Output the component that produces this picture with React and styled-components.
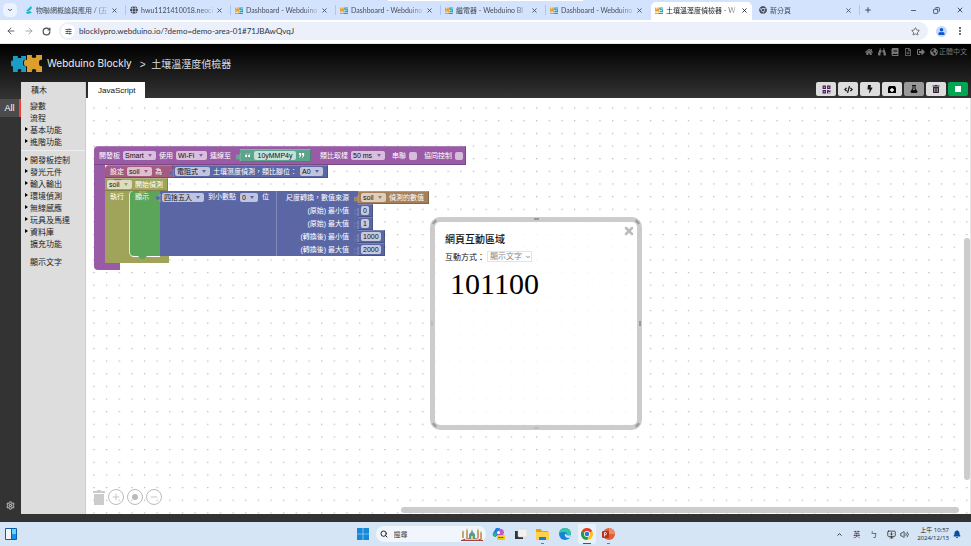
import styled, { createGlobalStyle, css } from 'styled-components'
import {
  FaHome, FaBinoculars, FaBook, FaRegFileAlt, FaSignOutAlt, FaGlobeAmericas,
  FaQrcode, FaCode, FaBolt, FaFlask, FaTrashAlt, FaBell, FaGlobe, FaUser, FaChrome,
} from 'react-icons/fa'
import {
  ArrowLeft, ArrowRight, RotateCw, SlidersHorizontal, Star, EllipsisVertical, ChevronDown,
  ChevronUp, X, Plus, Minus, Copy, Search, Settings, Volume2, MonitorDown,
} from 'lucide-react'

const colors = {
  dark: '#333333',
  purple: '#995ba5',
  red: '#a55b80',
  blue: '#5b67a5',
  olive: '#a0a45b',
  green: '#5ba55b',
  brown: '#a5805b',
  mint: '#5ba58c',
}

const sans = '"Liberation Sans", "Noto Sans CJK TC", sans-serif'
const ui = 'Lato, "Noto Sans CJK TC", sans-serif'

const GlobalStyle = createGlobalStyle`
  * { box-sizing: border-box; }
  body { margin: 0; font-family: ${sans}; color: #333; }
  button, input, select { font: inherit; color: inherit; margin: 0; padding: 0; border: 0; background: none; }
  svg { display: block; flex: none; }
`

const Page = styled.div`
  display: flex;
  flex-direction: column;
  height: 100vh;
  overflow: hidden;
`

/* ---------- browser ---------- */

const TabStrip = styled.div`
  position: relative;
  display: flex;
  align-items: center;
  height: 20px;
  padding: 0 4px 0 3px;
  background: #d3e3fd;
  font: 7px ${ui};
  color: #474c55;

  &::before {
    content: '';
    position: absolute;
    top: 0;
    left: 40%;
    right: 40%;
    height: 1px;
    background: #fff;
  }
`

const TabSearch = styled.button`
  display: grid;
  place-items: center;
  width: 14px;
  height: 14px;
  margin-right: 4px;
  border-radius: 5px;
  background: #ecf3fe;
`

const BrowserTab = styled.div`
  display: flex;
  align-items: center;
  flex: 0 1 105px;
  gap: 3px;
  min-width: 0;
  height: 10px;
  padding: 0 7px 0 4px;
  border-right: 1px solid #a8c7fa;
  ${({ $active }) => $active && css`
    flex-basis: 101px;
    height: 18px;
    margin: 2px 3px 0 0;
    padding: 0 4px 2px 4px;
    border: 0;
    border-radius: 5px 5px 0 0;
    background: #fff;
    color: #202124;
  `}
  ${({ $noLine }) => $noLine && css`border-color: transparent;`}
`

const TabTitle = styled.span`
  flex: 1;
  overflow: hidden;
  white-space: nowrap;
  mask-image: linear-gradient(90deg, #000 80%, rgba(0, 0, 0, 0.2));
`

const PlainButton = styled.button`
  display: grid;
  place-items: center;
  justify-self: start;
`

const WindowButtons = styled.div`
  display: flex;
  flex: 1;
  align-items: center;
  justify-content: flex-end;
  gap: 16px;
  padding-right: 3px;

  button:first-child { margin-right: auto; margin-left: 4px; }
`

const AddressRow = styled.div`
  display: flex;
  align-items: center;
  gap: 8px;
  height: 24px;
  padding: 0 6px 1px;
  border-bottom: 1px solid #e4e7ee;
  background: #fff;
  color: #44474c;
`

const AddressBar = styled.label`
  display: flex;
  align-items: center;
  flex: 1;
  gap: 4px;
  height: 18px;
  padding: 0 8px 0 2px;
  border-radius: 9px;
  background: #ecf0fa;

  input {
    flex: 1;
    font: 8px ${ui};
    color: #30343a;
  }
`

const SiteInfo = styled.span`
  display: grid;
  place-items: center;
  width: 14px;
  height: 14px;
  border-radius: 50%;
  background: #fff;
`

const Avatar = styled.span`
  display: grid;
  place-items: center;
  width: 11px;
  height: 11px;
  border-radius: 50%;
  background: #c5dafc;
  color: #0b57d0;
`

/* ---------- blockly app ---------- */

const AppShell = styled.div`
  display: flex;
  flex-direction: column;
  flex: 1;
  min-height: 0;
  padding-bottom: 8px;
  background: linear-gradient(#000, ${colors.dark} 54px);
`

const AppHeader = styled.header`
  display: flex;
  align-items: center;
  height: 38px;
  padding: 0 4px 0 10px;
  color: #ddd;
`

const Brand = styled.a`
  display: flex;
  align-items: center;
  gap: 4px;
  color: #eee;
  font: 10px Inter, ${sans};
  text-decoration: none;
`

const ProjectName = styled.h1`
  flex: 1;
  margin: 0 0 0 8px;
  font-size: 10px;
  font-weight: normal;
  white-space: pre;
`

const HeaderLinks = styled.nav`
  display: flex;
  align-self: flex-start;
  gap: 5px;
  padding-top: 4px;

  a {
    display: flex;
    align-items: center;
    gap: 1px;
    color: #777;
    font-size: 7px;
    line-height: 8px;
    text-decoration: none;
  }
`

const Main = styled.div`
  display: flex;
  flex: 1;
  min-height: 0;
`

const Rail = styled.aside`
  display: flex;
  flex-direction: column;
  justify-content: space-between;
  width: 21px;
  padding-top: 17px;
`

const RailButton = styled.button`
  display: grid;
  place-items: center;
  height: 18px;
  color: ${({ $active }) => ($active ? '#fff' : '#aaa')};
  font-size: 9px;
  ${({ $active }) => $active && css`
    background: #4b4b4b;
    border-right: 2px solid #f4402f;
  `}
`

const Toolbox = styled.nav`
  width: 65px;
  padding-top: 3px;
  background: #ddd;
  border-right: 1px solid #ccc;
  color: #222;
  font-size: 8px;
`

const ToolboxTitle = styled.h2`
  margin: 0 0 3px 10px;
  font-size: 8px;
  font-weight: normal;
  line-height: 11px;
`

const Category = styled.button`
  display: flex;
  align-items: center;
  gap: 3px;
  width: 100%;
  height: 12px;
  padding-left: ${({ $leaf }) => ($leaf ? '9px' : '4px')};
  white-space: nowrap;

  &::before {
    content: '';
    display: ${({ $leaf }) => ($leaf ? 'none' : 'block')};
    border-left: 3px solid #000;
    border-top: 2px solid transparent;
    border-bottom: 2px solid transparent;
    margin-right: -1px;
  }
`

const Divider = styled.hr`
  margin: 3px 0 2px;
  border: 0;
  border-top: 1px solid ${({ $hidden }) => ($hidden ? 'transparent' : '#eee')};
`

const Editor = styled.main`
  display: flex;
  flex-direction: column;
  flex: 1;
  min-width: 0;
`

const EditorBar = styled.div`
  display: flex;
  justify-content: space-between;
  height: 16px;
  padding: 0 3px 0 2px;
`

const CodeTab = styled.button`
  padding: 0 10px;
  background: #fff;
  color: #111;
  font-size: 8px;
`

const Actions = styled.div`
  display: flex;
  gap: 2px;
`

const ActionButton = styled.button`
  display: grid;
  place-items: center;
  width: 20px;
  height: 14px;
  border-radius: 2px;
  background: ${({ $bg }) => $bg || '#ddd'};
  color: ${({ $color }) => $color || '#111'};
`

const Workspace = styled.section`
  position: relative;
  flex: 1;
  overflow: hidden;
  border-right: 1px solid #e4e4e4;
  background: #fff;
`

const GridLayer = styled.svg`
  position: absolute;
  inset: 0;
`

const ZoomControls = styled.div`
  position: absolute;
  left: 7px;
  bottom: 9px;
  display: flex;
  align-items: center;
  gap: 3px;
  color: #bbb;
`

const RoundButton = styled.button`
  display: grid;
  place-items: center;
  width: 16px;
  height: 16px;
  border: 1px solid #bbb;
  border-radius: 50%;
`

const Scrollbar = styled.div`
  position: absolute;
  border-radius: 3px;
  background: #ccc;
  ${({ $vertical }) => ($vertical
    ? css`right: 0; top: 140px; bottom: 34px; width: 6px;`
    : css`bottom: 1px; left: 315px; right: 11px; height: 6px;`)}
`

/* ---------- blocks ---------- */

const Program = styled.div`
  position: absolute;
  left: 8px;
  top: 48px;
  color: #fff;
  font-size: 7px;
  line-height: 8px;
  white-space: nowrap;
`

const Row = styled.div`
  display: flex;
`

const Block = styled.div`
  position: relative;
  display: flex;
  align-items: center;
  width: max-content;
  height: ${({ $tall }) => ($tall ? '19px' : '13px')};
  gap: 3px;
  padding: 0 ${({ $end }) => $end || '4px'} 0 ${({ $start }) => $start || '4px'};
  border: 1px solid rgba(255, 255, 255, 0.2);
  border-right-color: rgba(0, 0, 0, 0.2);
  border-bottom-color: rgba(0, 0, 0, 0.2);
  border-width: 1px 1px 1px 0;
  border-radius: ${({ $round }) => ($round ? '4px 0 0 0' : '0')};
  background: ${({ $color }) => $color};
`

const Group = styled.div`
  display: flex;
  align-items: center;
  gap: 3px;
  margin-left: ${({ $gap }) => $gap || '0'};
`

const PlugShape = styled.svg`
  position: absolute;
  left: -4px;
  top: 3px;
`

const PillWrap = styled.span`
  position: relative;
  display: inline-flex;
  color: ${({ $color }) => $color};

  select {
    appearance: none;
    height: 9px;
    padding: 0 12px 0 2px;
    border-radius: 2px;
    background: rgba(255, 255, 255, 0.62);
    color: #111;
    line-height: 9px;
  }

  svg {
    position: absolute;
    right: 4px;
    top: 3px;
    pointer-events: none;
  }
`

const Field = styled.input`
  field-sizing: content;
  min-width: ${({ $wide }) => ($wide ? '42px' : '0')};
  height: 9px;
  padding: 0 2px;
  border-radius: 2px;
  background: rgba(255, 255, 255, 0.65);
  color: #111;
  line-height: 9px;
  text-align: center;
`

const Tick = styled.input`
  appearance: none;
  width: 8px;
  height: 8px;
  border-radius: 2px;
  background: rgba(255, 255, 255, 0.6);
`

const TickLabel = styled.label`
  display: flex;
  align-items: center;
  gap: 3px;
`

const Mouth = styled.div`
  position: relative;
  width: max-content;
  border-left: ${({ $arm }) => $arm} solid ${({ $color }) => $color};
`

const Foot = styled.div`
  width: ${({ $width }) => $width};
  height: 7px;
  border-radius: 0 0 0 ${({ $round }) => ($round ? '4px' : '0')};
  background: ${({ $color }) => $color};
`

const LoopLabel = styled.div`
  width: 25px;
  padding: 2px 0 0 5px;
  background: ${colors.olive};
`

const ShowBlock = styled.div`
  position: relative;
  width: 30px;
  padding: 2px 0 0 5px;
  border-radius: 4px 0 0 4px;
  background: ${colors.green};
  box-shadow: -1px 0 #e4e8cf, 0 1px #fff;
`

const LoopRow = styled(Row)`
  background: linear-gradient(90deg, ${colors.olive} 40px, transparent 40px);
`

const Notch = styled.svg`
  position: absolute;
  left: 8px;
  ${({ $below }) => ($below ? css`bottom: -3px;` : css`top: 0;`)}
`

const RoundBlock = styled.div`
  position: relative;
  display: flex;
  align-items: flex-start;
  gap: 4px;
  width: 117px;
  padding: 2px 0 0 2px;
  border-right: 1px solid #8189b9;
  background: ${colors.blue};
`

const ScaleLabels = styled.div`
  background: ${colors.blue};
  width: 81px;
  padding-right: 9px;
  text-align: right;

  div { height: 13px; padding-top: 3px; }
`

const socket = 'M4 0 V2 Q4 3 2 2 Q0 1 0 3 V5 Q0 7 2 6 Q4 5 4 6 V8 Z'

function Plug({ color }) {
  return <PlugShape width="5" height="8"><path d={socket + ' M4 0 H5 V8 H4 Z'} fill={color} stroke="#ffffff44" strokeWidth=".4" /></PlugShape>
}

function Bump({ color, below }) {
  return <Notch $below={below} width="9" height="3"><path d="M0 0 H9 L6 3 H3 Z" fill={color} /></Notch>
}

function Pill({ value, label, color }) {
  return (
    <PillWrap $color={color}>
      <select aria-label={label}><option>{value}</option></select>
      <svg width="4" height="3"><path d="M0 0 H4 L2 3 Z" fill="currentColor" /></svg>
    </PillWrap>
  )
}

const scaleRows = [
  ['(原始) 最小值', '0'],
  ['(原始) 最大值', '1'],
  ['(轉換後) 最小值', '1000'],
  ['(轉換後) 最大值', '2000'],
]

function BlockProgram() {
  return (
    <Program>
      <Block $color={colors.purple} $tall $round $start="5px" $end="2px">
        <span>開發板</span><Pill value="Smart" label="開發板" color={colors.purple} />
        <span>使用</span><Pill value="Wi-Fi" label="使用" color={colors.purple} />
        <span>連線至</span>
        <Group $gap="6px">
          <Block $color={colors.mint} $start="5px" $end="5px">
            <Plug color={colors.mint} />
            <svg width="6" height="5"><path d="M3 0 Q0 1 0 4 H2 V2 H1 M6 0 Q3 1 3 4 H5 V2 H4" fill="#fff" /></svg>
            <Field $wide aria-label="device" defaultValue="10yMMP4y" />
            <svg width="6" height="5"><path d="M0 0 H2 Q3 3 0 5 L1 2 H0 Z M3 0 H5 Q6 3 3 5 L4 2 H3 Z" fill="#fff" /></svg>
          </Block>
        </Group>
        <Group $gap="6px"><span>類比取樣</span><Pill value="50 ms" label="類比取樣" color={colors.purple} /></Group>
        <Group $gap="4px"><TickLabel>串聯<Tick type="checkbox" /></TickLabel></Group>
        <Group $gap="4px"><TickLabel>協同控制<Tick type="checkbox" /></TickLabel></Group>
      </Block>
      <Mouth $arm="11px" $color={colors.purple}>
        <Row>
          <Block $color={colors.red} $round $start="5px" $end="10px">
            <Bump color={colors.purple} />
            <span>設定</span><Pill value="soil" label="設定" color={colors.red} /><span>為</span>
          </Block>
          <Block $color={colors.blue} $start="2px">
            <Plug color={colors.blue} />
            <Pill value="電阻式" label="感測器" color={colors.blue} />
            <span>土壤濕度偵測，類比腳位：</span>
            <Pill value="A0" label="腳位" color={colors.blue} />
          </Block>
        </Row>
        <Block $color={colors.olive} $start="2px">
          <Bump color={colors.red} />
          <Pill value="soil" label="感測器" color={colors.olive} /><span>開始偵測</span>
        </Block>
        <LoopRow>
          <LoopLabel>執行</LoopLabel>
          <ShowBlock>
            <Bump color={colors.olive} />
            顯示
            <Bump below color={colors.green} />
          </ShowBlock>
          <RoundBlock>
            <Plug color={colors.blue} />
            <Pill value="四捨五入" label="方式" color={colors.blue} />
            <span>到小數點</span>
            <Pill value="0" label="小數點" color={colors.blue} />
            <span>位</span>
          </RoundBlock>
          <ScaleLabels>
            <div>尺度轉換，數值來源</div>
            {scaleRows.map(([label]) => <div key={label}>{label}</div>)}
          </ScaleLabels>
          <div>
            <Block $color={colors.brown} $start="3px">
              <Plug color={colors.brown} />
              <Pill value="soil" label="數值來源" color={colors.brown} /><span>偵測的數值</span>
            </Block>
            {scaleRows.map(([label, value]) => (
              <Block key={label} $color={colors.blue} $start="3px" $end="3px">
                <Plug color={colors.blue} />
                <Field aria-label={label} defaultValue={value} />
              </Block>
            ))}
          </div>
        </LoopRow>
        <Foot $width="64px" $color={colors.olive} />
      </Mouth>
      <Foot $width="26px" $round $color={colors.purple} />
    </Program>
  )
}

/* ---------- floating panel ---------- */

const Panel = styled.aside`
  position: absolute;
  left: 344px;
  top: 119px;
  width: 212px;
  height: 213px;
  padding: 12px 10px;
  border: 5px solid #ccc;
  border-radius: 10px;
  background: rgba(255, 255, 255, 0.8);
  color: #111;
  font-size: 8px;
`

const PanelTitle = styled.h2`
  margin: 0 0 5px;
  font-size: 10px;
  font-weight: 500;
  line-height: 12px;
`

const ModeRow = styled.label`
  display: flex;
  align-items: center;
  gap: 2px;
  height: 11px;
`

const ModeSelect = styled.span`
  display: flex;
  position: relative;
  color: #888;

  select {
    appearance: none;
    height: 11px;
    padding: 0 9px 0 2px;
    border: 1px solid #e4e4e4;
  }

  svg { position: absolute; right: 1px; top: 3px; }
`

const Output = styled.div`
  padding-left: 5px;
  margin-top: 4px;
  font: 30px/36px "Liberation Serif", serif;
  color: #000;
`

const PanelClose = styled.button`
  position: absolute;
  top: 3px;
  right: 2px;
  color: #bbb;
`

const Handle = styled.i`
  position: absolute;
  background: #999;
  ${({ $side }) => ({
    top: css`top: -4px; left: calc(50% - 2px); width: 5px; height: 2px;`,
    bottom: css`bottom: -4px; left: calc(50% - 2px); width: 5px; height: 2px; opacity: .3;`,
    left: css`left: -4px; top: calc(50% - 3px); width: 2px; height: 5px; opacity: .3;`,
    right: css`right: -4px; top: calc(50% - 3px); width: 2px; height: 5px;`,
    tl: css`left: -3px; top: -1px; width: 5px; height: 2px; transform: rotate(-45deg);`,
    tr: css`right: -3px; top: -1px; width: 5px; height: 2px; transform: rotate(45deg);`,
    bl: css`left: -3px; bottom: -1px; width: 5px; height: 2px; transform: rotate(45deg);`,
    br: css`right: -3px; bottom: -1px; width: 5px; height: 2px; transform: rotate(-45deg);`,
  })[$side]}
`

/* ---------- taskbar ---------- */

const Taskbar = styled.footer`
  display: grid;
  grid-template-columns: 1fr auto 1fr;
  align-items: center;
  height: 24px;
  padding: 0 5px;
  background: #d5e5f5;
  color: #222;
  font: 7px ${ui};
`

const TaskItems = styled.div`
  display: flex;
  align-items: center;
  gap: 4px;
`

const SearchBox = styled.label`
  display: flex;
  align-items: center;
  gap: 6px;
  width: 110px;
  height: 16px;
  padding: 0 3px 0 4px;
  border-radius: 8px;
  background: #f1f6fc;

  input { flex: 1; min-width: 0; font-size: 7px; }
  input::placeholder { color: #444; }
`

const TaskButton = styled.button`
  position: relative;
  display: grid;
  place-items: center;
  width: 18px;
  height: 20px;
  border-radius: 2px;
  background: ${({ $active }) => ($active ? '#e9f1fa' : 'none')};

  &::after {
    content: '';
    position: absolute;
    bottom: 0;
    display: ${({ $open }) => ($open ? 'block' : 'none')};
    width: ${({ $active }) => ($active ? '8px' : '3px')};
    height: 1px;
    background: ${({ $active }) => ($active ? '#0067c0' : '#777')};
  }
`

const Tray = styled.div`
  display: flex;
  align-items: center;
  justify-content: flex-end;
  gap: 10px;
  padding-right: 5px;
`

const TrayGroup = styled.div`
  display: flex;
  gap: 4px;
  margin-right: -2px;
`

const Clock = styled.time`
  font: 6px/8px "Open Sans", "Noto Sans CJK TC", sans-serif;
  text-align: right;
  margin-right: -6px;
`

function WebduinoIcon() {
  return (
    <svg width="8" height="7" viewBox="0 0 8 7">
      <path d="M0 .5 L1 4.500 L2.200 1.500 L3.200 4.500 L4.200 .5" fill="none" stroke="#f0a020" strokeWidth="1.100" />
      <path d="M8 1 H5 V2.800 H7.500 V4.600 H4.500" fill="none" stroke="#1aa6b8" strokeWidth="1.100" />
      <path d="M0 6.500 H4" stroke="#f0a020" /><path d="M4 6.500 H8" stroke="#1aa6b8" />
    </svg>
  )
}

function Logo() {
  return (
    <svg width="33" height="19" viewBox="0 0 33 19">
      <path d="M3 2 H8 Q7 4 9 4 H10 Q12 4 11 2 H16 V6 Q13 5 13 9 Q13 13 16 12 V18 H11 Q12 15 10 15 H9 Q7 15 8 18 H3 V12 Q1 14 1 9 Q1 5 3 7 Z" fill="#1a9cc7" />
      <path d="M17 1 H22 Q21 4 24 4 Q27 4 26 1 H32 V6 Q29 5 29 9 Q29 13 32 12 V18 H26 Q27 15 24 15 Q21 15 22 18 H17 V12 Q14 13 14 9 Q14 5 17 6 Z" fill="#dc9f2e" />
    </svg>
  )
}

function ReedIcon() {
  return <svg width="8" height="8"><path d="M1 5 L6 0 L7 2 L4 5 Z M1 6 L5 5 L7 7 L2 8 Z" fill="#18b7c4" /></svg>
}

const browserTabs = [
  { title: '物聯網概論與應用 / (五)', icon: <ReedIcon /> },
  { title: 'hwu1121410018.neoci', icon: <FaGlobe size={8} /> },
  { title: 'Dashboard - Webduino' },
  { title: 'Dashboard - Webduino' },
  { title: '繼電器 - Webduino Bl' },
  { title: 'Dashboard - Webduino', noLine: true },
  { title: '土壤溫溼度偵檢器 - W', active: true },
  { title: '新分頁', icon: <FaChrome size={8} /> },
]

const categories = [
  { name: '變數', leaf: true }, { name: '流程', leaf: true }, { name: '基本功能' }, { name: '進階功能' }, { divider: true },
  { name: '開發板控制' }, { name: '發光元件' }, { name: '輸入輸出' }, { name: '環境偵測' }, { name: '無線感應' },
  { name: '玩具及馬達' }, { name: '資料庫' }, { name: '擴充功能', leaf: true }, { divider: true, hidden: true },
  { name: '顯示文字', leaf: true },
]

function Browser() {
  return (
    <>
      <TabStrip>
        <TabSearch aria-label="search tabs"><ChevronDown size={6} strokeWidth={4} /></TabSearch>
        {browserTabs.map((tab, i) => (
          <BrowserTab key={i} $active={tab.active} $noLine={tab.noLine}>
            {tab.icon || <WebduinoIcon />}
            <TabTitle>{tab.title}</TabTitle>
            <PlainButton aria-label="close tab"><X size={7} strokeWidth={3} /></PlainButton>
          </BrowserTab>
        ))}
        <WindowButtons>
          <PlainButton aria-label="new tab"><Plus size={8} strokeWidth={3} /></PlainButton>
          <PlainButton aria-label="minimize"><Minus size={7} strokeWidth={3} /></PlainButton>
          <PlainButton aria-label="restore"><Copy size={7} strokeWidth={3} transform="scale(-1 1)" /></PlainButton>
          <PlainButton aria-label="close"><X size={8} strokeWidth={3} /></PlainButton>
        </WindowButtons>
      </TabStrip>
      <AddressRow>
        <PlainButton aria-label="back"><ArrowLeft size={10} /></PlainButton>
        <PlainButton aria-label="forward"><ArrowRight size={10} color="#999" /></PlainButton>
        <PlainButton aria-label="reload"><RotateCw size={9} strokeWidth={3} /></PlainButton>
        <AddressBar>
          <SiteInfo><SlidersHorizontal size={7} strokeWidth={3} /></SiteInfo>
          <input aria-label="address" defaultValue="blocklypro.webduino.io/?demo=demo-area-01#71JBAwQvqJ" />
          <Star size={9} />
        </AddressBar>
        <Avatar><FaUser size={7} /></Avatar>
        <PlainButton aria-label="menu"><EllipsisVertical size={10} strokeWidth={3} /></PlainButton>
      </AddressRow>
    </>
  )
}

export default function App() {
  return (
    <Page>
      <GlobalStyle />
      <Browser />
      <AppShell>
        <AppHeader>
          <Brand href="#"><Logo />Webduino Blockly</Brand>
          <ProjectName>{'>  土壤溫溼度偵檢器'}</ProjectName>
          <HeaderLinks>
            <a href="#home" aria-label="home"><FaHome size={8} /></a>
            <a href="#find" aria-label="find"><FaBinoculars size={8} /></a>
            <a href="#book" aria-label="book"><FaBook size={8} /></a>
            <a href="#docs" aria-label="docs"><FaRegFileAlt size={8} /></a>
            <a href="#login" aria-label="login"><FaSignOutAlt size={8} /></a>
            <a href="#lang"><FaGlobeAmericas size={8} />正體中文</a>
          </HeaderLinks>
        </AppHeader>
        <Main>
          <Rail>
            <RailButton $active>All</RailButton>
            <RailButton aria-label="settings"><Settings size={9} strokeWidth={3} /></RailButton>
          </Rail>
          <Toolbox>
            <ToolboxTitle>積木</ToolboxTitle>
            {categories.map((item, i) => (item.divider
              ? <Divider key={i} $hidden={item.hidden} />
              : <Category key={item.name} $leaf={item.leaf}>{item.name}</Category>))}
          </Toolbox>
          <Editor>
            <EditorBar>
              <CodeTab>JavaScript</CodeTab>
              <Actions>
                <ActionButton aria-label="qr code" $color="#4b1c5c"><FaQrcode size={9} /></ActionButton>
                <ActionButton aria-label="code"><FaCode size={9} /></ActionButton>
                <ActionButton aria-label="run"><FaBolt size={8} /></ActionButton>
                <ActionButton aria-label="save">
                  <svg width="8" height="7"><path d="M1 0 H7 L8 2 V7 H0 V2 Z" /><path d="M2 4 H6 M4 2 V6" stroke="#fff" strokeWidth="1.4" /></svg>
                </ActionButton>
                <ActionButton aria-label="lab" $bg="#999"><FaFlask size={8} /></ActionButton>
                <ActionButton aria-label="delete" $color="#332233"><FaTrashAlt size={8} /></ActionButton>
                <ActionButton aria-label="stop" $bg="#00a651"><svg width="6" height="6"><rect width="6" height="6" fill="#fff" /></svg></ActionButton>
              </Actions>
            </EditorBar>
            <Workspace>
              <GridLayer width="100%" height="100%">
                <defs>
                  <pattern id="dots" x="7.300" y="9.500" width="12.650" height="12.650" patternUnits="userSpaceOnUse">
                    <rect width="1.3" height="1.2" fill="#b8b8b8" />
                  </pattern>
                </defs>
                <rect width="100%" height="100%" fill="url(#dots)" />
              </GridLayer>
              <BlockProgram />
              <ZoomControls>
                <PlainButton aria-label="trash">
                  <svg width="12" height="16"><path d="M0 2 H4 V1 H8 V2 H12 V4 H0 Z M1 5 H11 V16 H1 Z" fill="#ccc" /></svg>
                </PlainButton>
                <RoundButton aria-label="zoom in"><Plus size={10} /></RoundButton>
                <RoundButton aria-label="center"><svg width="6" height="6"><circle cx="3" cy="3" r="3" fill="#bbb" /></svg></RoundButton>
                <RoundButton aria-label="zoom out"><Minus size={10} /></RoundButton>
              </ZoomControls>
              <Scrollbar $vertical />
              <Scrollbar />
              <Panel>
                {['top', 'bottom', 'left', 'right', 'tl', 'tr', 'bl', 'br'].map((side) => <Handle key={side} $side={side} />)}
                <PanelClose aria-label="close"><X size={12} strokeWidth={5} /></PanelClose>
                <PanelTitle>網頁互動區域</PanelTitle>
                <ModeRow>
                  互動方式：
                  <ModeSelect><select><option>顯示文字</option></select><ChevronDown size={6} strokeWidth={4} /></ModeSelect>
                </ModeRow>
                <Output>101100</Output>
              </Panel>
            </Workspace>
          </Editor>
        </Main>
      </AppShell>
      <Taskbar>
        <PlainButton aria-label="widgets">
          <svg width="12" height="12"><rect width="12" height="12" rx="1" fill="#0a5ca8" /><path d="M1 1 H6 V11 H1 Z" fill="#f4f4f4" /><path d="M7 1 H11 V6 H7 Z" fill="#5fd5ff" /><path d="M7 6 H11 V11 H7 Z" fill="#1a8fe8" /></svg>
        </PlainButton>
        <TaskItems>
          <TaskButton aria-label="start">
            <svg width="12" height="12"><path d="M0 0 H5.7 V5.7 H0 Z M6.3 0 H12 V5.7 H6.3 Z M0 6.3 H5.7 V12 H0 Z M6.3 6.3 H12 V12 H6.3 Z" fill="#1489d8" /></svg>
          </TaskButton>
          <SearchBox>
            <Search size={8} strokeWidth={3} />
            <input aria-label="search" placeholder="搜尋" />
            <svg width="22" height="13" viewBox="0 0 22 13">
              <path d="M0 12 Q11 8 22 12 V13 H0 Z" fill="#a63f3a" />
              <path d="M1 10 V4 L2 2 L3 4 V10 Z M5 10 V3 L6 0 L7 3 V10 Z M16 10 V3 L17 0 L18 3 V10 Z M19 11 V5 L20 3 L21 5 V11 Z" fill="#caa367" />
              <path d="M8 11 V6 Q11 4 11 0 Q11 4 14 6 V11 Z" fill="#5a9a92" />
              <path d="M4 11 H18 V12 H4 Z M10 8 H12 V11 H10 Z" fill="#e6cf7a" />
            </svg>
          </SearchBox>
          <TaskButton aria-label="copilot">
            <svg width="13" height="12" viewBox="0 0 13 12"><path d="M4 0 H8 L6 8 H2 Q0 8 1 5 Z" fill="#1f7fdb" /><path d="M7 1 H10 Q12 2 12 5 L10 9 H5 Z" fill="#c457c9" /><path d="M1 5 H5 L4 9 H2 Z" fill="#2cb67d" /><circle cx="6.500" cy="4.500" r="1.500" fill="#fff" /><rect x="5" y="7" width="8" height="5" rx="1" fill="#f2c811" /><path d="M6.500 9.500 H11.500" stroke="#5b4a00" strokeDasharray="2 .7" /></svg>
          </TaskButton>
          <TaskButton aria-label="task view">
            <svg width="12" height="12"><rect y="3" width="8" height="8" fill="#333" /><rect x="3" y="1" width="9" height="8" rx="1" fill="#f2f2f2" stroke="#ccc" strokeWidth=".5" /></svg>
          </TaskButton>
          <TaskButton aria-label="files" $open>
            <svg width="13" height="11"><path d="M0 0 H5 L6 2 H12 V4 H0 Z" fill="#e5a50a" /><path d="M0 3 H13 V11 H0 Z" fill="#ffd04c" /><path d="M3 11 V8 H10 V11 Z" fill="#1a7fd4" /></svg>
          </TaskButton>
          <TaskButton aria-label="edge">
            <svg width="12" height="12"><circle cx="6" cy="6" r="6" fill="#1483d8" /><path d="M0 5 Q1 0 6 0 Q12 0 12 6 Q11 9 8 8 Q9 4 5 4 Q2 4 0 5 Z" fill="#37c6a5" /><path d="M6 6 Q5 9 9 10 Q11 10 11 9 L12 7 Q8 9 7 6 Z" fill="#d5e5f5" /></svg>
          </TaskButton>
          <TaskButton aria-label="chrome" $open $active>
            <svg width="12" height="12"><circle cx="6" cy="6" r="6" fill="#fbc116" /><path d="M6 6 L.8 3 A6 6 0 0 1 11.200 3 Z" fill="#e33b2e" /><path d="M6 6 L.8 3 A6 6 0 0 0 6 12 L8 7 Z" fill="#259b45" /><circle cx="6" cy="6" r="3" fill="#fff" /><circle cx="6" cy="6" r="2.300" fill="#2a74e6" /></svg>
          </TaskButton>
          <TaskButton aria-label="powerpoint" $open>
            <svg width="13" height="12"><circle cx="7" cy="6" r="6" fill="#e0603a" /><path d="M7 0 A6 6 0 0 1 13 6 H7 Z" fill="#f08a5e" /><rect y="3" width="7" height="7" rx="1" fill="#b8321a" /><path d="M2.500 8.500 V4.500 H4 Q5 5.500 4 6.800 H2.500" fill="none" stroke="#fff" strokeWidth=".8" /></svg>
          </TaskButton>
        </TaskItems>
        <Tray>
          <ChevronUp size={7} strokeWidth={3} />
          <span>英</span>
          <span>ㄅ</span>
          <TrayGroup><MonitorDown size={9} /><Volume2 size={9} /></TrayGroup>
          <Clock>上午 10:57<br />2024/12/13</Clock>
          <FaBell size={8} color="#0b4f9e" />
        </Tray>
      </Taskbar>
    </Page>
  )
}
